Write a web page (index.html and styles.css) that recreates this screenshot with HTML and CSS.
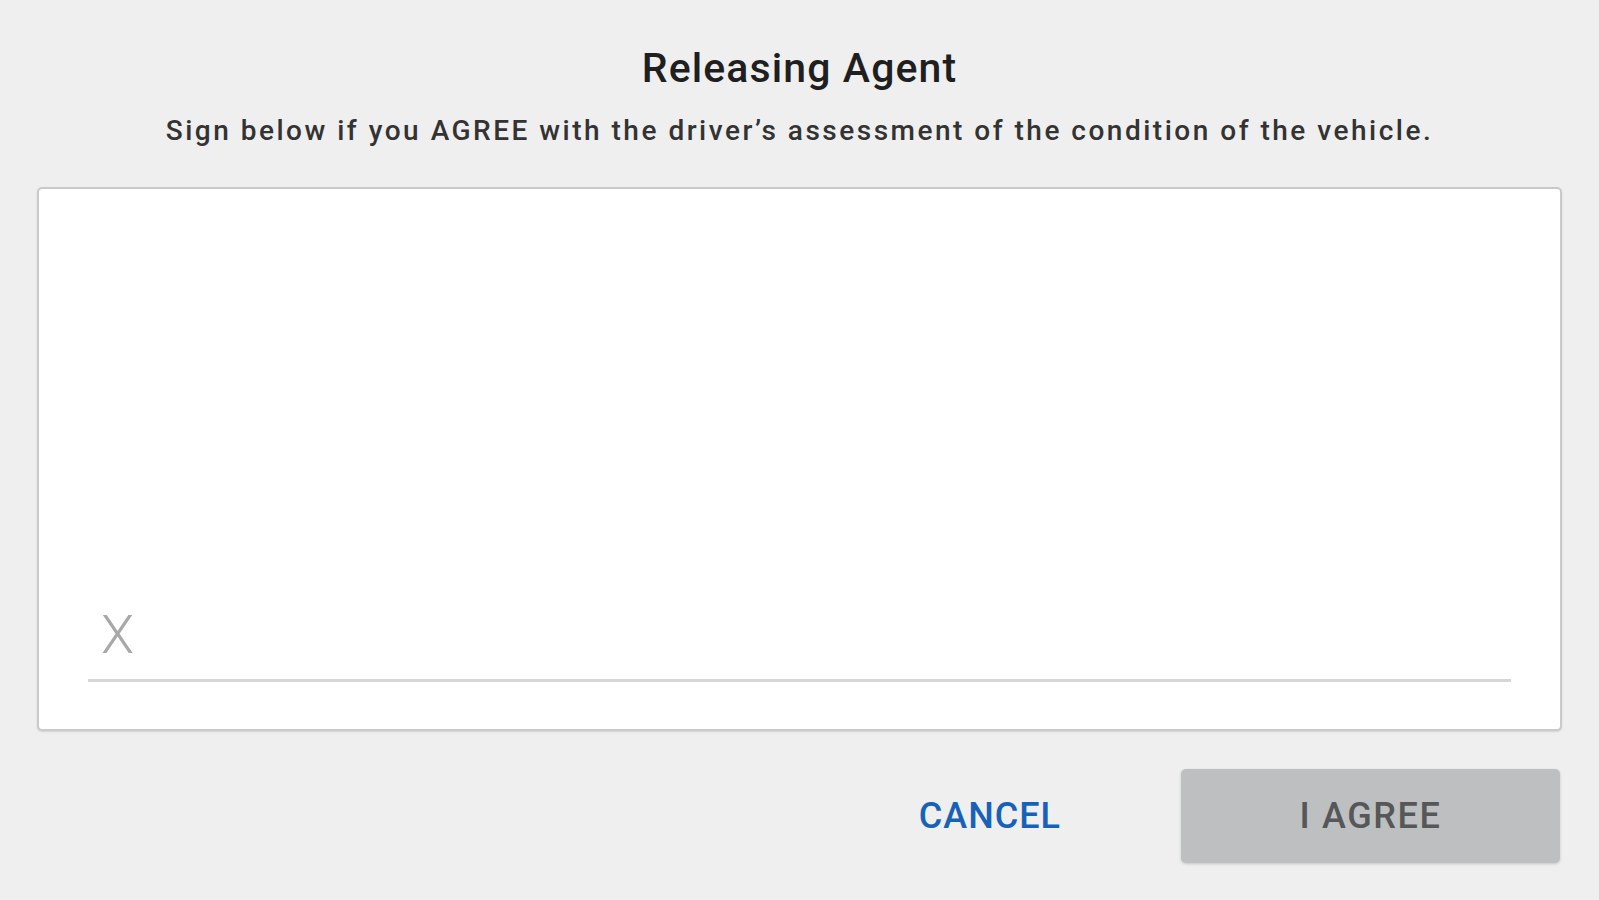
FILE: index.html
```html
<!DOCTYPE html>
<html>
<head>
<meta charset="utf-8">
<title>Releasing Agent</title>
<link rel="stylesheet" href="styles.css">
</head>
<body>
<div class="dialog">
  <h1 class="title">Releasing Agent</h1>
  <p class="subtitle">Sign below if you AGREE with the driver’s assessment of the condition of the vehicle.</p>
  <div class="sig-box">
    <div class="sig-x">X</div>
    <div class="sig-line"></div>
  </div>
  <div class="actions">
    <button class="btn-cancel">CANCEL</button>
    <button class="btn-agree">I AGREE</button>
  </div>
</div>
</body>
</html>
```

FILE: styles.css
```css
html, body {
  margin: 0;
  padding: 0;
  background: #efefef;
}
body {
  font-family: Roboto, "Liberation Sans", sans-serif;
  width: 1599px;
  height: 900px;
  overflow: hidden;
}
.dialog {
  padding: 44px 37px 0 37px;
  display: flex;
  flex-direction: column;
}
.title {
  margin: 0;
  font-size: 41px;
  line-height: 48px;
  font-weight: 500;
  letter-spacing: 1.1px;
  color: #1f1f1f;
  text-align: center;
}
.subtitle {
  margin: 23px 0 0 0;
  font-size: 28px;
  line-height: 32px;
  font-weight: 500;
  letter-spacing: 2.5px;
  color: #333;
  text-align: center;
}
.sig-box {
  box-sizing: border-box;
  margin-top: 40px;
  height: 544px;
  background: #fff;
  border: 2px solid #cacaca;
  border-radius: 5px;
  box-shadow: 0 1px 2px rgba(0,0,0,0.12);
  display: flex;
  flex-direction: column;
  justify-content: flex-end;
  padding: 0 49px 47px 49px;
}
.sig-x {
  font-size: 54px;
  line-height: 54px;
  font-weight: 300;
  color: #a8a8a8;
  padding-left: 13px;
  margin-bottom: 17px;
}
.sig-line {
  height: 3px;
  background: #d6d6d6;
}
.actions {
  margin-top: 38px;
  display: flex;
  justify-content: flex-end;
  align-items: center;
  gap: 120px;
  padding-right: 2px;
}
.btn-cancel {
  background: none;
  border: none;
  padding: 0;
  font-family: Roboto, "Liberation Sans", sans-serif;
  font-size: 36px;
  font-weight: 500;
  letter-spacing: 1px;
  color: #1762b8;
}
.btn-agree {
  width: 379px;
  height: 94px;
  background: #bdbfc0;
  border: none;
  border-radius: 5px;
  box-shadow: 0 1px 3px rgba(0,0,0,0.18);
  font-family: Roboto, "Liberation Sans", sans-serif;
  font-size: 36px;
  font-weight: 500;
  letter-spacing: 1.6px;
  color: #555758;
}
```
